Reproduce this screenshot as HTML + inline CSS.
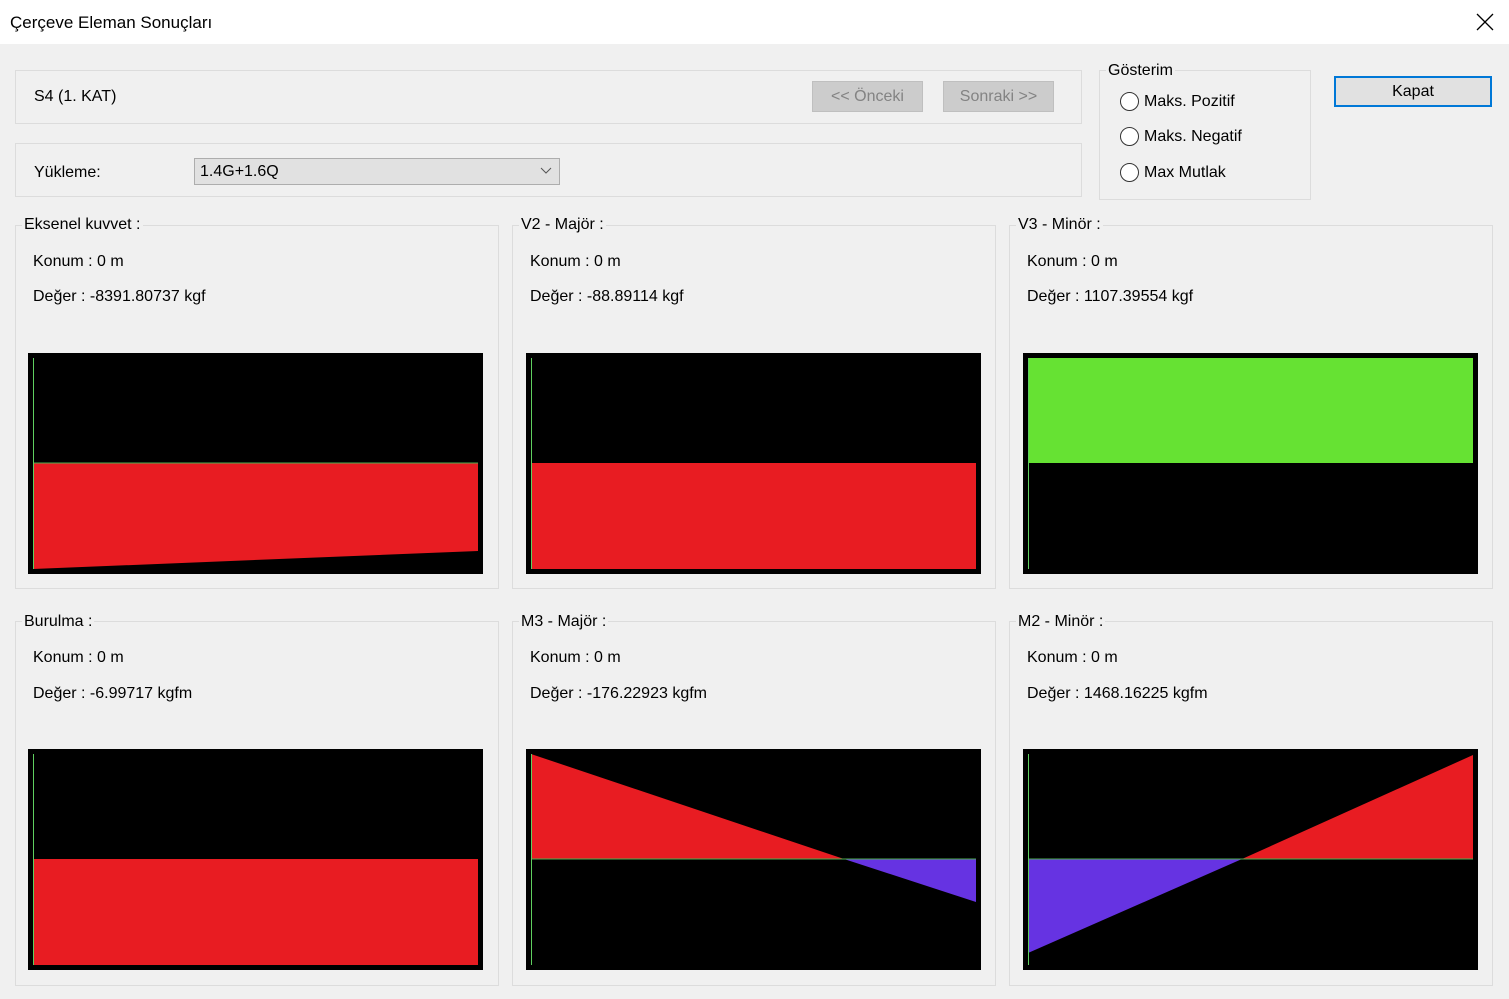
<!DOCTYPE html>
<html><head><meta charset="utf-8"><style>
*{margin:0;padding:0;box-sizing:border-box}
body{width:1509px;height:999px;background:#f0f0f0;font-family:"Liberation Sans",sans-serif;font-size:16px;color:#000;position:relative;overflow:hidden}
.a{position:absolute;white-space:nowrap}
.box{position:absolute;border:1px solid #dcdcdc}
.lg{position:absolute;background:#f0f0f0;padding:0 2px;font-size:16px}
.btn{position:absolute;background:#cccccc;border:1px solid #bfbfbf;color:#838383;text-align:center;font-size:16px;line-height:29px}
.rad{position:absolute;width:19px;height:19px;border:1px solid #333;border-radius:50%;background:#fff}
svg{position:absolute}
</style></head><body>
<div class="a" style="left:0;top:0;width:1509px;height:44px;background:#fff"></div>
<div class="a" style="left:10px;top:13px;font-size:17px">Çerçeve Eleman Sonuçları</div>
<svg style="left:1476px;top:13px" width="18" height="18"><path d="M1 1L17 17M17 1L1 17" stroke="#000" stroke-width="1.3"/></svg>

<div class="box" style="left:15px;top:70px;width:1067px;height:54px"></div>
<div class="a" style="left:34px;top:88px">S4 (1. KAT)</div>
<div class="btn" style="left:812px;top:81px;width:111px;height:31px">&lt;&lt; Önceki</div>
<div class="btn" style="left:943px;top:81px;width:111px;height:31px">Sonraki &gt;&gt;</div>

<div class="box" style="left:15px;top:143px;width:1067px;height:54px"></div>
<div class="a" style="left:34px;top:164px">Yükleme:</div>
<div class="a" style="left:194px;top:158px;width:366px;height:27px;background:#e1e1e1;border:1px solid #adadad;padding-left:5px;line-height:25px;font-size:16px">1.4G+1.6Q</div>
<svg style="left:540px;top:167px" width="12" height="8"><path d="M1 1L6 6L11 1" stroke="#555" fill="none"/></svg>

<div class="box" style="left:1099px;top:70px;width:212px;height:130px"></div>
<div class="lg" style="left:1106px;top:62px">Gösterim</div>
<div class="rad" style="left:1120px;top:92px"></div><div class="a" style="left:1144px;top:93px">Maks. Pozitif</div>
<div class="rad" style="left:1120px;top:127px"></div><div class="a" style="left:1144px;top:128px">Maks. Negatif</div>
<div class="rad" style="left:1120px;top:163px"></div><div class="a" style="left:1144px;top:164px">Max Mutlak</div>
<div class="a" style="left:1334px;top:76px;width:158px;height:31px;background:#e1e1e1;border:2px solid #0078d7;text-align:center;line-height:27px">Kapat</div>

<div class="box" style="left:15px;top:225px;width:484px;height:364px"></div>
<div class="lg" style="left:22px;top:216px">Eksenel kuvvet :</div>
<div class="a" style="left:33px;top:253px">Konum : 0 m</div>
<div class="a" style="left:33px;top:288px">Değer : -8391.80737 kgf</div>
<svg style="left:28px;top:353px" width="455" height="221"><rect width="455" height="221" fill="#000"/><polygon points="5,110 450,110 450,198 5,216" fill="#e81c22"/><line x1="5" y1="110" x2="450" y2="110" stroke="#4caf50"/><line x1="5.5" y1="5" x2="5.5" y2="216" stroke="#5fcf5f"/></svg>

<div class="box" style="left:512px;top:225px;width:484px;height:364px"></div>
<div class="lg" style="left:519px;top:216px">V2 - Majör :</div>
<div class="a" style="left:530px;top:253px">Konum : 0 m</div>
<div class="a" style="left:530px;top:288px">Değer : -88.89114 kgf</div>
<svg style="left:526px;top:353px" width="455" height="221"><rect width="455" height="221" fill="#000"/><rect x="5" y="110" width="445" height="106" fill="#e81c22"/><line x1="5.5" y1="5" x2="5.5" y2="216" stroke="#5fcf5f"/></svg>

<div class="box" style="left:1009px;top:225px;width:484px;height:364px"></div>
<div class="lg" style="left:1016px;top:216px">V3 - Minör :</div>
<div class="a" style="left:1027px;top:253px">Konum : 0 m</div>
<div class="a" style="left:1027px;top:288px">Değer : 1107.39554 kgf</div>
<svg style="left:1023px;top:353px" width="455" height="221"><rect width="455" height="221" fill="#000"/><rect x="5" y="5" width="445" height="105" fill="#66e233"/><line x1="5.5" y1="5" x2="5.5" y2="216" stroke="#5fcf5f"/></svg>

<div class="box" style="left:15px;top:621px;width:484px;height:365px"></div>
<div class="lg" style="left:22px;top:613px">Burulma :</div>
<div class="a" style="left:33px;top:649px">Konum : 0 m</div>
<div class="a" style="left:33px;top:685px">Değer : -6.99717 kgfm</div>
<svg style="left:28px;top:749px" width="455" height="221"><rect width="455" height="221" fill="#000"/><rect x="5" y="110" width="445" height="106" fill="#e81c22"/><line x1="5.5" y1="5" x2="5.5" y2="216" stroke="#5fcf5f"/></svg>

<div class="box" style="left:512px;top:621px;width:484px;height:365px"></div>
<div class="lg" style="left:519px;top:613px">M3 - Majör :</div>
<div class="a" style="left:530px;top:649px">Konum : 0 m</div>
<div class="a" style="left:530px;top:685px">Değer : -176.22923 kgfm</div>
<svg style="left:526px;top:749px" width="455" height="221"><rect width="455" height="221" fill="#000"/><polygon points="5,5 318,110 5,110" fill="#e81c22"/><polygon points="318,110 450,153 450,110" fill="#6633e2"/><line x1="5" y1="110" x2="450" y2="110" stroke="#4caf50"/><line x1="5.5" y1="5" x2="5.5" y2="216" stroke="#5fcf5f"/></svg>

<div class="box" style="left:1009px;top:621px;width:484px;height:365px"></div>
<div class="lg" style="left:1016px;top:613px">M2 - Minör :</div>
<div class="a" style="left:1027px;top:649px">Konum : 0 m</div>
<div class="a" style="left:1027px;top:685px">Değer : 1468.16225 kgfm</div>
<svg style="left:1023px;top:749px" width="455" height="221"><rect width="455" height="221" fill="#000"/><polygon points="5,110 219,110 5,204" fill="#6633e2"/><polygon points="219,110 450,6 450,110" fill="#e81c22"/><line x1="5" y1="110" x2="450" y2="110" stroke="#4caf50"/><line x1="5.5" y1="5" x2="5.5" y2="216" stroke="#5fcf5f"/></svg>
</body></html>
